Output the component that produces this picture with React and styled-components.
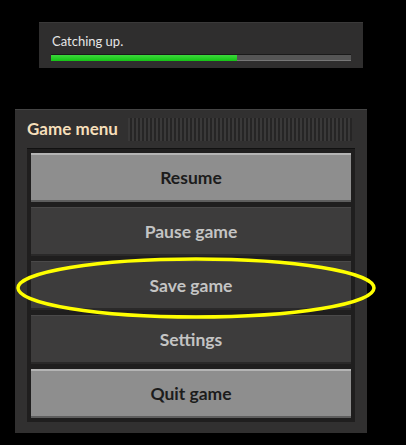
import React from "react";
import styled, { createGlobalStyle } from "styled-components";

const Global = createGlobalStyle`
  html, body {
    margin: 0;
    padding: 0;
    background: #000;
  }
  body {
    font-family: "Lato", "Open Sans", sans-serif;
  }
`;

const Page = styled.div`
  position: relative;
  width: 406px;
  height: 445px;
  padding-top: 22px;
  box-sizing: border-box;
`;

// progress window

const StatusPanel = styled.div`
  margin-left: 39px;
  width: 324px;
  height: 46px;
  box-sizing: border-box;
  padding: 10px 12px 0 12px;
  background: #2f2e2e;
  border-top: 1px solid #3a3939;
`;

const StatusText = styled.div`
  color: #e6e6e6;
  font-size: 13px;
  line-height: 16px;
  padding-left: 1px;
`;

const Track = styled.div`
  margin-top: 5px;
  height: 7px;
  width: 300px;
  background: #555;
  border-top: 1px solid #1a1a1a;
  box-sizing: border-box;
  box-shadow: inset 0 -1px 0 #777;
`;

const Fill = styled.div`
  height: 100%;
  background: linear-gradient(#3cd83c, #14c414);
`;

// game menu

const MenuPanel = styled.div`
  margin-top: 41px;
  margin-left: 15px;
  width: 352px;
  height: 324px;
  box-sizing: border-box;
  padding: 8px 12px 12px 12px;
  background: #313030;
  border-top: 1px solid #444;
  display: flex;
  flex-direction: column;
`;

const TitleRow = styled.div`
  display: flex;
  align-items: center;
  height: 23px;
  margin-bottom: 7px;
`;

const Title = styled.div`
  color: #f6dfba;
  font-weight: 700;
  font-size: 17px;
  margin-top: -3px;
  margin-right: 10px;
`;

const Stripes = styled.div`
  flex: 1;
  height: 23px;
  margin-right: 3px;
  background: repeating-linear-gradient(
    90deg,
    #3a3939 0px,
    #3a3939 2px,
    #262525 2px,
    #262525 4px
  );
`;

const ButtonFrame = styled.div`
  flex: 1;
  background: #1f1e1e;
  padding: 5px 4px 4px 4px;
  display: flex;
  flex-direction: column;
  gap: 5px;
  box-shadow: inset 0 1px 0 #111;
`;

const MenuButton = styled.button`
  height: 49px;
  border: none;
  margin: 0;
  padding: 0 0 1px 0;
  font-family: "Lato", "Open Sans", sans-serif;
  font-weight: 700;
  font-size: 17.5px;
  background: ${(p) => (p.$light ? "#8e8e8e" : "#3d3c3c")};
  color: ${(p) => (p.$light ? "#1c1c1c" : "#c4c4c4")};
  box-shadow: ${(p) =>
    p.$light
      ? "inset 0 2px 0 #b4b4b4, inset 0 -2px 0 #5e5e5e"
      : "inset 0 1px 0 #4a4949, inset 0 -2px 0 #2a2929"};
`;

const Highlight = styled.svg`
  position: absolute;
  left: 0;
  top: 0;
  pointer-events: none;
`;

const items = [
  { label: "Resume", light: true },
  { label: "Pause game" },
  { label: "Save game" },
  { label: "Settings" },
  { label: "Quit game", light: true },
];

export default function App() {
  const progress = 0.62;
  return (
    <Page>
      <Global />
      <StatusPanel>
        <StatusText>Catching up.</StatusText>
        <Track>
          <Fill style={{ width: `${progress * 100}%` }} />
        </Track>
      </StatusPanel>
      <MenuPanel>
        <TitleRow>
          <Title>Game menu</Title>
          <Stripes />
        </TitleRow>
        <ButtonFrame>
          {items.map((it) => (
            <MenuButton key={it.label} $light={it.light}>
              {it.label}
            </MenuButton>
          ))}
        </ButtonFrame>
      </MenuPanel>
      <Highlight width="406" height="445">
        <ellipse cx="196" cy="288" rx="178" ry="29" fill="none" stroke="#ffff00" strokeWidth="3.5" />
      </Highlight>
    </Page>
  );
}
